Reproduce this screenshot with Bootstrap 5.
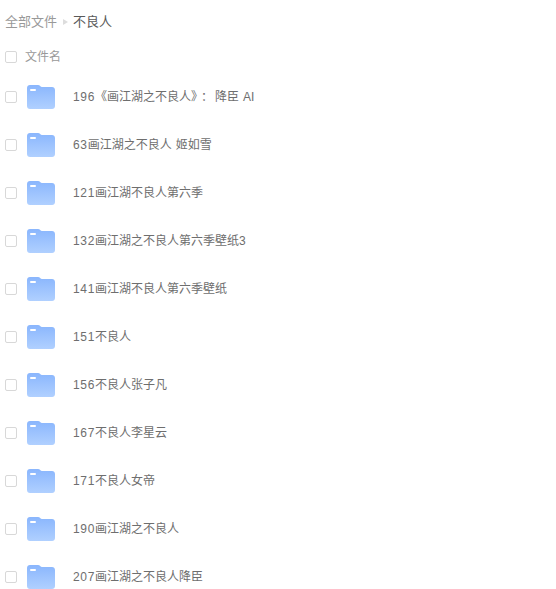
<!DOCTYPE html>
<html lang="zh">
<head>
    <meta charset="UTF-8">
    <meta name="viewport" content="width=device-width, initial-scale=1.0">
    <link rel="stylesheet" href="https://cdn.jsdelivr.net/npm/bootstrap@5.3.2/dist/css/bootstrap.min.css">
    <title>不良人</title>
    <style>
        html, body { height: 589px; overflow: hidden; }
        body { background: #fff; font-family: "Liberation Sans", "Noto Sans CJK SC", sans-serif; font-size: 12px; color: #6e6e6e; }
        .crumbs { height: 42px; padding: 1px 0 0 5px; font-size: 13px; color: #999; }
        .crumbs b { font-weight: 400; color: #5a5a5a; }
        .crumb-arrow { width: 0; height: 0; border-left: 5px solid #ddd; border-top: 3.500px solid transparent; border-bottom: 3.500px solid transparent; margin: 0 5px 0 6px; }
        .head-row { height: 30px; margin-bottom: 1px; padding-left: 5px; color: #999; }
        .file-row { height: 48px; padding-left: 5px; }
        .tick { width: 12px; height: 12px; border: 1px solid #d8d8d8; border-radius: 2px; background: #fff; flex: none; }
        .head-row .tick { margin-right: 8px; }
        .file-row .tick { margin-right: 10px; }
        .folder { width: 28px; height: 24px; flex: none; margin-right: 18px; }
        .latin { letter-spacing: .65px; }
        .colon { padding-left: 4px; margin-right: -2px; }
    </style>
</head>
<body>
    <div class="crumbs d-flex align-items-center">
        <span>全部文件</span><span class="crumb-arrow"></span><b>不良人</b>
    </div>
    <div class="head-row d-flex align-items-center">
        <span class="tick"></span><span>文件名</span>
    </div>
    <div id="lista"></div>

    <svg width="0" height="0" class="d-block">
        <defs>
            <linearGradient id="gradCarpeta" x1="0" y1="0" x2="0" y2="1">
                <stop offset="0" stop-color="#8ab6fd"/>
                <stop offset="1" stop-color="#b0d0ff"/>
            </linearGradient>
        </defs>
    </svg>

    <script>
        const nombres = [
            "196《画江湖之不良人》： 降臣 AI",
            "63画江湖之不良人 姬如雪",
            "121画江湖不良人第六季",
            "132画江湖之不良人第六季壁纸3",
            "141画江湖不良人第六季壁纸",
            "151不良人",
            "156不良人张子凡",
            "167不良人李星云",
            "171不良人女帝",
            "190画江湖之不良人",
            "207画江湖之不良人降臣"
        ];
        let filas = '';
        nombres.forEach(nombre => {
            // los digitos del original son mas anchos que los de Liberation
            let texto = nombre.replace(/[0-9 ]+/g, m => `<span class="latin">${m}</span>`)
                .replace("：", `<span class="colon">：</span>`);
            filas += `
                <div class="file-row d-flex align-items-center">
                    <span class="tick"></span>
                    <svg class="folder" viewBox="0 0 28 24">
                        <path d="M3 0H11C13 0 13.500 2 15 2H25C26.700 2 28 3.300 28 5V21C28 22.700 26.700 24 25 24H3C1.300 24 0 22.700 0 21V3C0 1.300 1.300 0 3 0Z" fill="url(#gradCarpeta)"/>
                        <rect x="3" y="4" width="6" height="2" rx="1" fill="#fff"/>
                    </svg>
                    <span>${texto}</span>
                </div>
            `;
        });
        document.querySelector("#lista").innerHTML = filas;
    </script>
    <script src="https://cdn.jsdelivr.net/npm/bootstrap@5.3.2/dist/js/bootstrap.bundle.min.js"></script>
</body>
</html>
